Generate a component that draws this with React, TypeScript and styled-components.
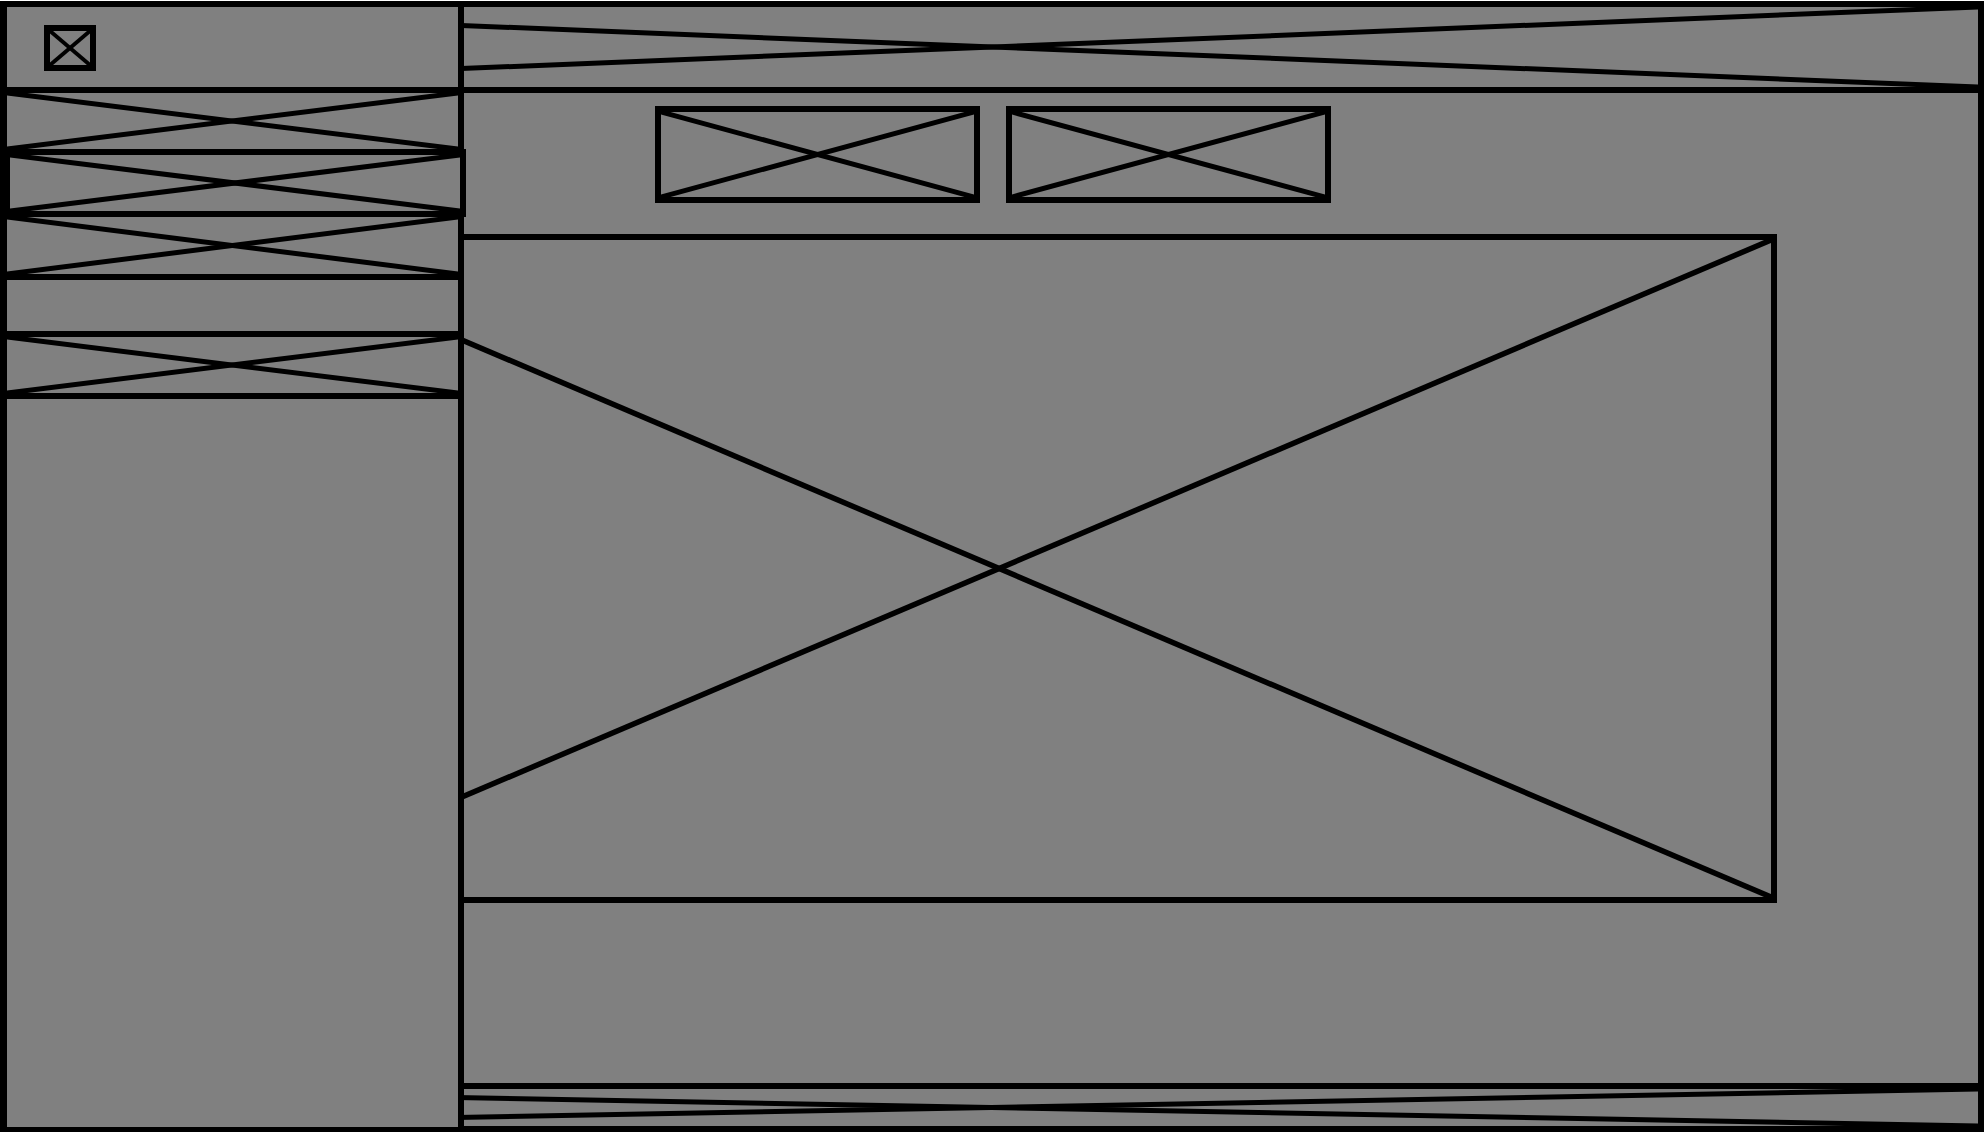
import styled, { createGlobalStyle } from "styled-components";

const GlobalStyle = createGlobalStyle`
  html, body {
    margin: 0;
    padding: 0;
    overflow: hidden;
    background: #ffffff;
    font-family: "Liberation Sans", Arial, sans-serif;
  }
  * {
    box-sizing: border-box;
  }
`;

const Cross = ({ weight = 5 }: { weight?: number }) => (
  <CrossSvg viewBox="0 0 100 100" preserveAspectRatio="none">
    <line x1="0" y1="0" x2="100" y2="100" strokeWidth={weight} vectorEffect="non-scaling-stroke" />
    <line x1="100" y1="0" x2="0" y2="100" strokeWidth={weight} vectorEffect="non-scaling-stroke" />
  </CrossSvg>
);

const App = () => {
  return (
    <Page>
      <GlobalStyle />
      <Main>
        <Header>
          <Cross />
        </Header>
        <Body>
          <Tabs>
            <Tab>
              <Cross />
            </Tab>
            <Tab>
              <Cross />
            </Tab>
          </Tabs>
          <Stage>
            <Cross weight={5.5} />
          </Stage>
        </Body>
        <Footer>
          <Cross />
        </Footer>
      </Main>
      <Sidebar>
        <Brand>
          <Logo>
            <Cross weight={4} />
          </Logo>
        </Brand>
        <NavItem>
          <Cross />
        </NavItem>
        <NavItem $active>
          <Cross />
        </NavItem>
        <NavItem $height={69}>
          <Cross />
        </NavItem>
        <NavSpacer />
        <NavItem>
          <Cross />
        </NavItem>
        <SidebarFill />
      </Sidebar>
    </Page>
  );
};

const Page = styled.div`
  position: relative;
  width: 1984px;
  height: 1132px;
  background: #ffffff;
`;

const CrossSvg = styled.svg`
  display: block;
  width: 100%;
  height: 100%;
  stroke: #000000;
`;

const Box = styled.div`
  background: #808080;
  border: 6px solid #000000;
`;

const Main = styled.div`
  margin-top: 1px;
  height: 1131px;
  display: flex;
  flex-direction: column;
`;

const Header = styled(Box)`
  height: 92px;
  flex-shrink: 0;
`;

const Body = styled.div`
  flex: 1;
  background: #808080;
  border-left: 6px solid #000000;
  border-right: 6px solid #000000;
  padding-top: 13px;
  display: flex;
  flex-direction: column;
`;

const Tabs = styled.div`
  display: flex;
  justify-content: center;
  gap: 26px;
  padding-left: 2px;
`;

const Tab = styled(Box)`
  width: 325px;
  height: 97px;
`;

const Stage = styled(Box)`
  margin-top: 31px;
  margin-left: 215px;
  width: 1556px;
  height: 669px;
`;

const Footer = styled(Box)`
  height: 49px;
  flex-shrink: 0;
`;

const Sidebar = styled.aside`
  position: absolute;
  top: 0;
  left: 0;
  width: 464px;
  height: 1132px;
  display: flex;
  flex-direction: column;
`;

const SideBox = styled(Box)`
  border-left-width: 7px;
`;

const Brand = styled(SideBox)`
  height: 92px;
  padding: 18px 0 0 37px;
`;

const Logo = styled(Box)`
  width: 52px;
  height: 46px;
`;

const NavItem = styled(SideBox)<{ $active?: boolean; $height?: number }>`
  position: relative;
  height: ${(p) => p.$height ?? 68}px;
  margin-top: -6px;
  flex-shrink: 0;
  z-index: ${(p) => (p.$active ? 1 : 0)};
  margin-left: ${(p) => (p.$active ? 3 : 0)}px;
  margin-right: ${(p) => (p.$active ? -2 : 0)}px;
`;

const NavSpacer = styled(SideBox)`
  height: 63px;
  margin-top: -6px;
  flex-shrink: 0;
`;

const SidebarFill = styled(SideBox)`
  flex: 1;
  margin-top: -6px;
`;

export default App;
